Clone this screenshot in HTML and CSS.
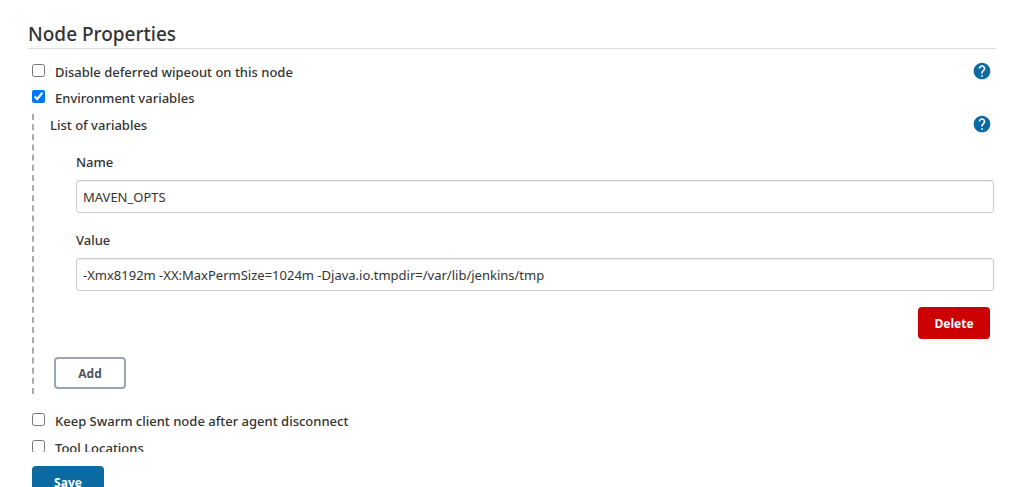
FILE: index.html
```html
<!DOCTYPE html>
<html lang="en">
<head>
    <meta charset="UTF-8">
    <meta name="viewport" content="width=device-width, initial-scale=1.0">
    <title>Node Properties</title>
    <link rel="stylesheet" href="styles.css">
</head>
<body>
    <form class="page">
        <div class="content">
            <h1 class="title">Node Properties</h1>

            <div class="option">
                <input type="checkbox" id="wipeout">
                <label for="wipeout">Disable deferred wipeout on this node</label>
                <button type="button" class="help" aria-label="Help">
                    <svg viewBox="0 0 24 24"><path d="M12 2C6.48 2 2 6.48 2 12s4.48 10 10 10 10-4.48 10-10S17.52 2 12 2zm1 17h-2v-2h2v2zm2.07-7.75l-.9.92C13.45 12.9 13 13.5 13 15h-2v-.5c0-1.1.45-2.1 1.17-2.83l1.24-1.26c.37-.36.59-.86.59-1.41 0-1.1-.9-2-2-2s-2 .9-2 2H8c0-2.21 1.79-4 4-4s4 1.79 4 4c0 .88-.36 1.68-.93 2.25z"/></svg>
                </button>
            </div>
            <div class="option">
                <input type="checkbox" id="env" checked>
                <label for="env">Environment variables</label>
            </div>

            <!-- Environment variables -->
            <div class="nested">
                <div class="list-header">
                    <span>List of variables</span>
                    <button type="button" class="help" aria-label="Help">
                        <svg viewBox="0 0 24 24"><path d="M12 2C6.48 2 2 6.48 2 12s4.48 10 10 10 10-4.48 10-10S17.52 2 12 2zm1 17h-2v-2h2v2zm2.07-7.75l-.9.92C13.45 12.9 13 13.5 13 15h-2v-.5c0-1.1.45-2.1 1.17-2.83l1.24-1.26c.37-.36.59-.86.59-1.41 0-1.1-.9-2-2-2s-2 .9-2 2H8c0-2.21 1.79-4 4-4s4 1.79 4 4c0 .88-.36 1.68-.93 2.25z"/></svg>
                    </button>
                </div>
                <div class="variable">
                    <div class="field">
                        <label for="name">Name</label>
                        <input type="text" id="name" value="MAVEN_OPTS">
                    </div>
                    <div class="field">
                        <label for="value">Value</label>
                        <input type="text" id="value" value="-Xmx8192m -XX:MaxPermSize=1024m -Djava.io.tmpdir=/var/lib/jenkins/tmp">
                    </div>
                    <button type="button" class="btn delete">Delete</button>
                </div>
                <button type="button" class="btn add">Add</button>
            </div>

            <div class="option">
                <input type="checkbox" id="swarm">
                <label for="swarm">Keep Swarm client node after agent disconnect</label>
            </div>
            <div class="option">
                <input type="checkbox" id="tools">
                <label for="tools">Tool Locations</label>
            </div>
        </div>

        <!-- Bottom bar -->
        <div class="bottom-bar">
            <button type="submit" class="btn save">Save</button>
        </div>
    </form>
</body>
</html>
```

FILE: styles.css
```css
* {
    box-sizing: border-box;
}
body {
    margin: 0;
    font-family: "Segoe UI", "Noto Sans", sans-serif;
    font-size: 13px;
    font-weight: 500;
    line-height: 20px;
    color: #333;
    background-color: #fff;
}
.page {
    display: flex;
    flex-direction: column;
    height: 100vh;
    overflow: hidden;
}
.content {
    flex: 1;
    min-height: 0;
    overflow: hidden;
    padding: 20px 14px 0 28px;
}
.title {
    margin: 0 0 13px;
    font-size: 19px;
    font-weight: 500;
    line-height: 28px;
    border-bottom: 1px solid #ddd;
}

/* Checkbox rows */
.option {
    display: flex;
    align-items: flex-start;
    height: 20px;
    margin: 0 4px 6px;
}
.nested ~ .option {
    margin-bottom: 7px;
}
.option input {
    width: 13px;
    height: 13px;
    margin: 2px 10px 0 0;
}
.help {
    display: block;
    width: 20px;
    height: 20px;
    margin: -1px 0 0 auto;
    padding: 0;
    border: none;
    background: none;
    cursor: pointer;
}
.help svg {
    display: block;
    width: 20px;
    height: 20px;
    fill: #0b6aa2;
}

/* Variable list */
.nested {
    display: flex;
    flex-direction: column;
    align-items: flex-start;
    margin: 0 0 17px 4px;
    padding-left: 16px;
    border-left: 2px dashed #aaa;
}
.list-header {
    display: flex;
    align-self: stretch;
    padding: 1px 4px 0 0;
}
.variable {
    display: flex;
    flex-direction: column;
    align-self: stretch;
    padding: 17px 2px 0 26px;
}
.field {
    display: flex;
    flex-direction: column;
    gap: 8px;
    margin-bottom: 16px;
}
.field + .field {
    margin-top: 1px;
}
.field label {
    align-self: flex-start;
}
.field input {
    width: 100%;
    height: 33px;
    padding: 6px;
    border: 1px solid #ccc;
    border-radius: 3px;
    box-shadow: inset 0 1px 1px rgba(0, 0, 0, 0.08);
    font-family: inherit;
    font-size: 13px;
    color: #333;
}

/* Buttons */
.btn {
    min-width: 72px;
    height: 32px;
    padding: 0 16px;
    border: none;
    border-radius: 4px;
    font-family: "Segoe UI", "Open Sans", sans-serif;
    font-size: 12px;
    font-weight: 700;
    color: #fff;
    cursor: pointer;
}
.delete {
    align-self: flex-end;
    margin: 0 4px 18px;
    background-color: #c00;
}
.add {
    margin: 0 4px 5px;
    border: 2px solid #9aa5b1;
    background-color: #fff;
    color: #4d545d;
}
.bottom-bar {
    height: 35px;
    padding: 14px 32px 0;
    overflow: hidden;
}
.save {
    background-color: #0b6aa2;
}
```
